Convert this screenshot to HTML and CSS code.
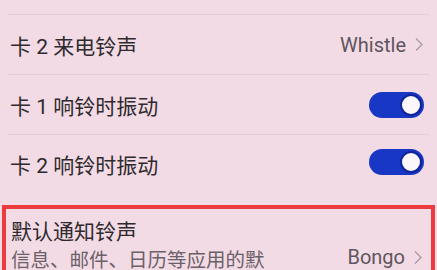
FILE: index.html
```html
<!DOCTYPE html>
<html lang="zh-CN">
<head>
    <meta charset="UTF-8">
    <meta name="viewport" content="width=device-width, initial-scale=1.0">
    <title>声音设置</title>
    <link rel="stylesheet" href="styles.css">
</head>
<body>
    <div class="list">
        <div class="top-gap"></div>

        <div class="row">
            <span class="title">卡 2 来电铃声</span>
            <span class="value">Whistle
                <svg class="chev" viewBox="0 0 10 16"><polyline points="2,2 8,8 2,14"/></svg>
            </span>
        </div>

        <div class="row">
            <span class="title">卡 1 响铃时振动</span>
            <span class="switch on"><span class="knob"></span></span>
        </div>

        <div class="row last">
            <span class="title">卡 2 响铃时振动</span>
            <span class="switch on"><span class="knob"></span></span>
        </div>

        <div class="highlight">
            <div class="title">默认通知铃声</div>
            <div class="sub">信息、邮件、日历等应用的默认铃声</div>
            <span class="value">Bongo
                <svg class="chev" viewBox="0 0 10 16"><polyline points="2,2 8,8 2,14"/></svg>
            </span>
        </div>
    </div>
</body>
</html>
```

FILE: styles.css
```css
body { margin: 0; background: #f3dbe5; font-family: Roboto, "Noto Sans CJK SC", sans-serif; overflow: hidden; height: 270px; }
.list { width: 437px; }
.top-gap { height: 14px; border-bottom: 1px solid #e5cbd6; margin: 0 8px; }
.row { height: 59px; margin: 0 8px; padding: 0 2px; border-bottom: 1px solid #e5cbd6; display: flex; align-items: center; justify-content: space-between; }
.row.last { border-bottom: none; height: 70px; align-items: flex-start; padding-top: 14px; box-sizing: border-box; }
.title { font-size: 21px; color: #2e2a2d; }
.value { font-size: 20px; color: #5e5560; display: flex; align-items: center; gap: 8px; margin-right: 3px; }
.chev { width: 10px; height: 17px; fill: none; stroke: #a89ea6; stroke-width: 1.4; }
.switch { width: 55px; height: 26px; border-radius: 13px; background: #1737c4; position: relative; margin-right: 3px; }
.knob { position: absolute; right: 2px; top: 2px; width: 18px; height: 18px; border-radius: 50%; background: #fbf7fb; border: 2px solid #10259a; }
.highlight { margin: 0 2px; border: 4px solid #ec3b3f; border-bottom: none; padding: 9px 5px 0 5px; display: grid; grid-template-columns: 1fr auto; grid-template-rows: 28px auto; }
.highlight .title { grid-column: 1 / 3; line-height: 28px; }
.sub { font-size: 19.5px; line-height: 30px; color: #6b6168; width: 264px; }
.highlight .value { align-self: start; line-height: 23px; }
```
